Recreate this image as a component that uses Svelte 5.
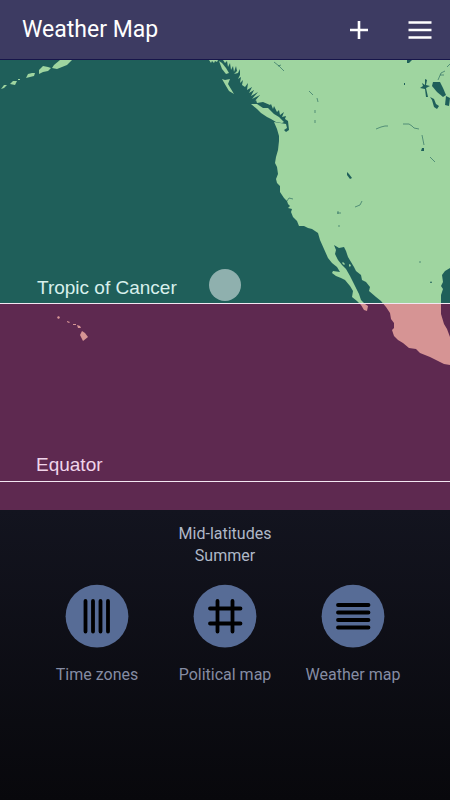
<script>
  const land =
    'M209 60 L211 63 L212 61 L214 63 L215 61 L217 62 L218 60 L223 60 L225 63 L227 61 L228 67 L230 63 L231 70 L233 66 L234 72 L236 66 L237 71 L234 74 L238 73 L240 69 L240 75 L238 79 L241 77 L240 83 L243 80 L242 85 L245 87 L248 83 L247 90 L252 87 L249 93 L254 90 L251 96 L258 92 L252 99 L260 95 L254 102 L256 100 L257 103 L263 102 L270 105 L271 104 L273 109 L274 106 L277 112 L279 110 L280 115 L284 112 L282 117 L286 116 L285 119 L288 121 L289 130 L286 132 L284 130 L287 128 L286 124 L274 122 L277 129 L279 136 L279 141 L278 150 L276 157 L275 163 L277 167 L278 174 L276 179 L277 183 L280 186 L280 192 L284 198 L287 201 L288 204 L290 206 L288 208 L292 209 L291 212 L293 217 L297 221 L299 226 L304 226 L308 228 L312 229 L318 233 L320 240 L324 249 L328 258 L332 263 L337 267 L340 272 L333 271 L332 273 L336 276 L341 278 L345 280 L350 286 L353 291 L352 297 L357 301 L361 305 L364 310 L367 311 L368 306 L365 304 L361 300 L359 294 L354 284 L350 276 L346 269 L342 265 L338 260 L335 254 L336 250 L334 245 L339 248 L344 247 L346 251 L348 257 L351 262 L354 267 L356 271 L361 275 L362 280 L366 282 L370 287 L369 291 L376 297 L381 301 L386 307 L390 313 L391 319 L394 323 L394 328 L392 330 L394 336 L398 340 L403 343 L409 348 L416 349 L420 353 L430 357 L438 361 L444 364 L450 365 L450 337 L447 329 L444 324 L441 314 L441 295 L443 289 L441 286 L443 282 L442 275 L445 271 L450 268 L450 60 Z';

  const islands = [
    'M219 61 L222 63 L226 68 L229 73 L226 74 L222 69 Z',
    'M222 79 L225 80 L230 79 L228 84 L231 89 L234 94 L229 91 L226 86 Z',
    'M251 104 L257 104 L263 108 L268 108 L274 114 L279 117 L284 122 L282 123 L276 122 L271 119 L267 117 L261 113 L257 109 Z',
    'M72 60 L67 65 L62 67 L57 69 L52 68 L54 65 L60 60 Z',
    'M51 68 L48 71 L43 72 L39 74 L39 70 L43 66 L48 67 Z',
    'M35 73 L34 76 L26 78 L28 74 L32 73 Z',
    'M17 81 L15 85 L10 84 L13 81 Z',
    'M7 85 L4 88 L1 89 L4 85 Z',
    'M18 79 H20 V80 H18 Z',
    'M58 316 L60 317 L59 319 L57 318 Z',
    'M67 321 L70 322 L69 323 L67 322 Z',
    'M73 324 L76 324 L76 325 L73 325 Z',
    'M77 325 L80 326 L81 328 L78 328 Z',
    'M82 331 L85 333 L88 337 L83 341 L80 335 Z',
    'M343 262 L345 264 L344 265 L342 263 Z',
    'M349 264 L351 265 L350 267 L349 266 Z'
  ];

  const lakes = [
    'M433 82 L440 82 L443 88 L446 95 L443 97 L437 92 L432 86 Z',
    'M425 79 L427 80 L426 85 L430 86 L426 88 L428 97 L426 97 L425 89 L420 88 L423 86 L422 83 L425 85 Z',
    'M430 97 L434 99 L436 104 L439 106 L437 109 L434 107 L432 100 Z',
    'M446 96 L450 98 L449 106 L445 105 Z',
    'M407 60 H412 L409 63 H407 Z',
    'M347 172 L349 174 L352 178 L350 179 L347 175 Z',
    'M404 83 H405 V85 H404 Z',
    'M422 148 H424 V151 H421 Z',
    'M431 281 L432 283 H430 Z'
  ];

  const rivers = [
    'M376 129 L381 127 L385 126 L388 126',
    'M403 124 L409 124 L412 126 L414 128 L419 129',
    'M422 135 L423 140 L424 145',
    'M430 157 L435 162',
    'M438 80 L441 73 L445 71 M440 75 L444 75 M447 67 L450 64',
    'M274 62 L279 66 L284 71 M278 66 L281 65',
    'M309 91 L313 95 M317 98 L318 102 M315 110 V113 M315 120 V123',
    'M287 201 L289 198 L293 199',
    'M337 213 L341 213 M338 211 V214 M355 207 L360 205 L362 201',
    'M419 262 H421 M338 226 H340'
  ];

  const modes = [
    { label: 'Time zones', icon: 'M20.5 17V47.5M28 17V47.5M35.5 17V47.5M43 17V47.5' },
    { label: 'Political map', icon: 'M24.5 17V47.5M39.5 17V47.5M17 24.5H47.5M17 39.5H47.5' },
    { label: 'Weather map', icon: 'M17 21H47.5M17 28.5H47.5M17 36H47.5M17 43.5H47.5' }
  ];
</script>

<main>
  <header>
    <h1>Weather Map</h1>
    <button class="tool" aria-label="Add">
      <svg width="24" height="24" viewBox="0 0 24 24"><path d="M12 3V21M3 12H21" /></svg>
    </button>
    <button class="tool" aria-label="Menu">
      <svg width="24" height="24" viewBox="0 0 24 24"><path d="M0.5 4.5H23.5M0.5 12H23.5M0.5 19.5H23.5" /></svg>
    </button>
  </header>

  {#snippet terrain()}
    <path d={land} />
    {#each islands as d}<path {d} />{/each}
  {/snippet}

  <svg class="map" viewBox="0 60 450 450" role="img" aria-label="Climate zones of the eastern Pacific">
    <defs>
      <clipPath id="north"><rect y="60" width="450" height="243" /></clipPath>
      <clipPath id="tropics"><rect y="303" width="450" height="207" /></clipPath>
    </defs>
    <rect class="sea-north" y="60" width="450" height="243" />
    <rect class="sea-tropics" y="303" width="450" height="207" />
    <g class="land-north" clip-path="url(#north)">{@render terrain()}</g>
    <g class="land-tropics" clip-path="url(#tropics)">{@render terrain()}</g>
    <g class="lakes">{#each lakes as d}<path {d} />{/each}</g>
    <g class="rivers">{#each rivers as d}<path {d} />{/each}</g>
    <rect class="line" y="303" width="450" height="1" />
    <rect class="line" y="481" width="450" height="1" />
    <text class="north" x="37" y="294">Tropic of Cancer</text>
    <text class="tropic" x="36" y="471">Equator</text>
    <circle cx="225" cy="285" r="16" />
  </svg>

  <section>
    <p>Mid-latitudes<br />Summer</p>
    <nav>
      {#each modes as mode}
        <button class="mode">
          <svg width="64" height="64" viewBox="0 0 64 64" aria-hidden="true">
            <circle cx="32" cy="32.2" r="31.4" />
            <path d={mode.icon} />
          </svg>
          <span>{mode.label}</span>
        </button>
      {/each}
    </nav>
  </section>
</main>

<style>
  :global(body) {
    margin: 0;
    background: #08080c;
  }

  main {
    display: flex;
    flex-direction: column;
    min-height: 100vh;
    font-family: Roboto, sans-serif;
  }

  header {
    display: flex;
    align-items: center;
    box-sizing: border-box;
    height: 60px;
    padding: 0 18px 0 22px;
    gap: 37px;
    background: #3d3b62;
    box-shadow: inset 0 -1px #17154a;
  }

  h1 {
    flex: 1;
    margin: 0;
    color: #fff;
    font-size: 23px;
    font-weight: 400;
    line-height: 28px;
  }

  button {
    padding: 0;
    border: 0;
    background: none;
    font: inherit;
    cursor: pointer;
  }

  svg {
    display: block;
  }

  .tool path {
    fill: none;
    stroke: #fff;
    stroke-width: 2.6;
  }

  .map {
    width: 100%;
    height: auto;
  }

  .sea-north,
  .lakes {
    fill: #1f5f5a;
  }

  .sea-tropics {
    fill: #5e2950;
  }

  .land-north {
    fill: #9fd5a0;
  }

  .land-tropics {
    fill: #d69494;
  }

  .rivers {
    fill: none;
    stroke: #1f5f5a;
    stroke-width: 0.6;
  }

  .line {
    fill: #f3e6f2;
  }

  .map text {
    font-family: "Liberation Sans", Arial, sans-serif;
    font-size: 19px;
  }

  .north {
    fill: #d8f0ec;
  }

  .tropic {
    fill: #f0d4ea;
  }

  .map circle {
    fill: #8fb0ae;
  }

  section {
    flex: 1;
    padding: 13px 33px 24px;
    background: linear-gradient(#13141f, #08080c);
  }

  p {
    margin: 0 0 17px;
    color: #afb8c8;
    font-size: 16px;
    line-height: 22px;
    text-align: center;
  }

  nav {
    display: grid;
    grid-template-columns: repeat(3, 1fr);
  }

  .mode {
    display: flex;
    flex-direction: column;
    align-items: center;
    gap: 16px;
    color: #858ca3;
    font-size: 16px;
    line-height: 22px;
    white-space: nowrap;
  }

  .mode circle {
    fill: #576c96;
  }

  .mode path {
    fill: none;
    stroke: #000;
    stroke-width: 3.8;
    stroke-linecap: round;
  }
</style>
